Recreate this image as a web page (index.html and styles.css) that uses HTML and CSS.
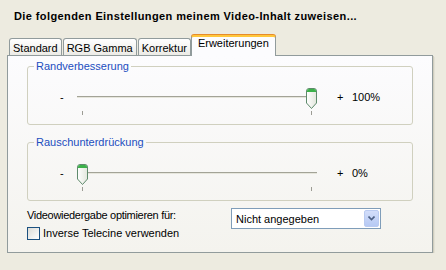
FILE: index.html
```html
<!DOCTYPE html>
<html>
<head>
	<title> Video-Einstellungen </title>
	<link rel="stylesheet" href="styles.css">
</head>
<body>
	<h1 class="heading">Die folgenden Einstellungen meinem Video-Inhalt zuweisen...</h1>

	<div class="tabs">
		<span class="tab">Standard</span>
		<span class="tab">RGB Gamma</span>
		<span class="tab">Korrektur</span>
		<span class="tab active">Erweiterungen</span>
	</div>

	<div class="page">
		<fieldset class="group">
			<legend>Randverbesserung</legend>
			<div class="sliderRow">
				<span class="minus">-</span>
				<div class="slider">
					<div class="track"></div>
					<span class="tick tickStart"></span>
					<span class="tick tickEnd"></span>
					<svg class="thumb" style="left: 229px" width="11" height="21" viewBox="0 0 11 21">
						<defs>
							<linearGradient id="thumbFill" x1="0" y1="0" x2="1" y2="0">
								<stop offset="0" stop-color="#ffffff"/>
								<stop offset="1" stop-color="#e2e6dc"/>
							</linearGradient>
						</defs>
						<path d="M0.5 3 Q0.5 0.5 3 0.5 H8 Q10.5 0.5 10.5 3 V15 L5.5 20.5 L0.5 15 Z" fill="url(#thumbFill)" stroke="#5f8a6c"/>
						<path d="M1 3 Q1 1 3 1 H8 Q10 1 10 3 V4 H1 Z" fill="#3cb14a"/>
					</svg>
				</div>
				<span class="plus">+</span>
				<span class="value">100%</span>
			</div>
		</fieldset>

		<fieldset class="group">
			<legend>Rauschunterdrückung</legend>
			<div class="sliderRow">
				<span class="minus">-</span>
				<div class="slider">
					<div class="track"></div>
					<span class="tick tickStart"></span>
					<span class="tick tickEnd"></span>
					<svg class="thumb" style="left: 0px" width="11" height="21" viewBox="0 0 11 21">
						<path d="M0.5 3 Q0.5 0.5 3 0.5 H8 Q10.5 0.5 10.5 3 V15 L5.5 20.5 L0.5 15 Z" fill="url(#thumbFill)" stroke="#5f8a6c"/>
						<path d="M1 3 Q1 1 3 1 H8 Q10 1 10 3 V4 H1 Z" fill="#3cb14a"/>
					</svg>
				</div>
				<span class="plus">+</span>
				<span class="value">0%</span>
			</div>
		</fieldset>

		<div class="options">
			<div class="optionsLeft">
				<span class="optionLabel">Videowiedergabe optimieren für:</span>
				<label class="check"><span class="checkBox"></span>Inverse Telecine verwenden</label>
			</div>
			<div class="combo">
				<span class="comboText">Nicht angegeben</span>
				<span class="comboArrow">
					<svg width="7" height="5" viewBox="0 0 7 5">
						<path d="M0.5 0.5 L3.5 3.5 L6.5 0.5" fill="none" stroke="#4d6185" stroke-width="1.6"/>
					</svg>
				</span>
			</div>
		</div>
	</div>
</body>
</html>
```

FILE: styles.css
```css
body {
	margin: 0;
	padding: 10px 7px 0;
	background: #edebe0;
	color: black;
	font-family: "Liberation Sans", Arial, sans-serif;
	font-size: 11px;
}
.heading {
	margin: 0 0 0 7px;
	font-size: 11px;
	font-weight: bold;
	line-height: 13px;
	letter-spacing: 0.4px;
}
.tabs {
	display: flex;
	align-items: flex-end;
	gap: 1px;
	margin-top: 12px;
	padding-left: 2px;
	position: relative;
	z-index: 1;
}
.tab {
	box-sizing: border-box;
	height: 17px;
	padding: 3px 3px 0;
	line-height: 13px;
	border: 1px solid #919b9c;
	border-bottom: 0;
	border-radius: 3px 3px 0 0;
	background: linear-gradient(#ffffff, #ecebe6);
}
.tab.active {
	height: 21px;
	margin: 0 0 -1px -1px;
	padding: 0 6px;
	border-top: 2px solid #ffc73c;
	box-shadow: 0 -1px 0 #e68b2c;
	background: #fcfcfe;
}
.page {
	box-sizing: border-box;
	width: 426px;
	padding: 4px 19px 12px;
	border: 1px solid #919b9c;
	background: linear-gradient(#fcfcfe, #f4f3ee);
	box-shadow: 1px 1px 0 #d0cebf, 2px 2px 0 #e3e1d5;
}
.group {
	margin: 0;
	padding: 15px 0 9px;
	border: 1px solid #d0d0bf;
	border-radius: 3px;
	min-width: 0;
}
.group + .group {
	margin-top: 11px;
}
.group legend {
	margin-left: 6px;
	padding: 0 2px;
	line-height: 13px;
	color: #1c4ebf;
}
.sliderRow {
	display: flex;
	align-items: flex-start;
	padding-left: 32px;
}
.minus, .plus, .value {
	line-height: 18px;
}
.minus {
	width: 17px;
}
.plus {
	width: 15px;
	margin-left: 20px;
}
.slider {
	position: relative;
	width: 240px;
	height: 27px;
}
.track {
	position: absolute;
	left: 0;
	right: 0;
	top: 8px;
	height: 1px;
	background: #a3a397;
	border-bottom: 1px solid #e6e6dc;
}
.tick {
	position: absolute;
	top: 23px;
	width: 1px;
	height: 4px;
	background: #9c9c94;
}
.tickStart {
	left: 5px;
}
.tickEnd {
	left: 234px;
}
.thumb {
	position: absolute;
	top: 0;
	display: block;
}
.options {
	display: flex;
	margin-top: 7px;
}
.optionsLeft {
	display: flex;
	flex-direction: column;
	width: 204px;
}
.optionLabel {
	padding-top: 1px;
	line-height: 13px;
	letter-spacing: -0.3px;
}
.check {
	display: flex;
	align-items: center;
	gap: 3px;
	margin-top: 5px;
	line-height: 13px;
}
.checkBox {
	box-sizing: border-box;
	width: 13px;
	height: 13px;
	border: 1px solid #1c5180;
	background: linear-gradient(135deg, #dcdcd7, #ffffff);
}
.combo {
	box-sizing: border-box;
	display: flex;
	align-items: center;
	width: 150px;
	height: 21px;
	padding: 1px;
	border: 1px solid #7f9db9;
	background: white;
}
.comboText {
	flex: 1;
	padding-left: 3px;
}
.comboArrow {
	box-sizing: border-box;
	display: flex;
	align-items: center;
	justify-content: center;
	width: 15px;
	height: 17px;
	border: 1px solid #bacbf1;
	border-radius: 2px;
	background: linear-gradient(#d3defa, #b6c9f4);
}
```
